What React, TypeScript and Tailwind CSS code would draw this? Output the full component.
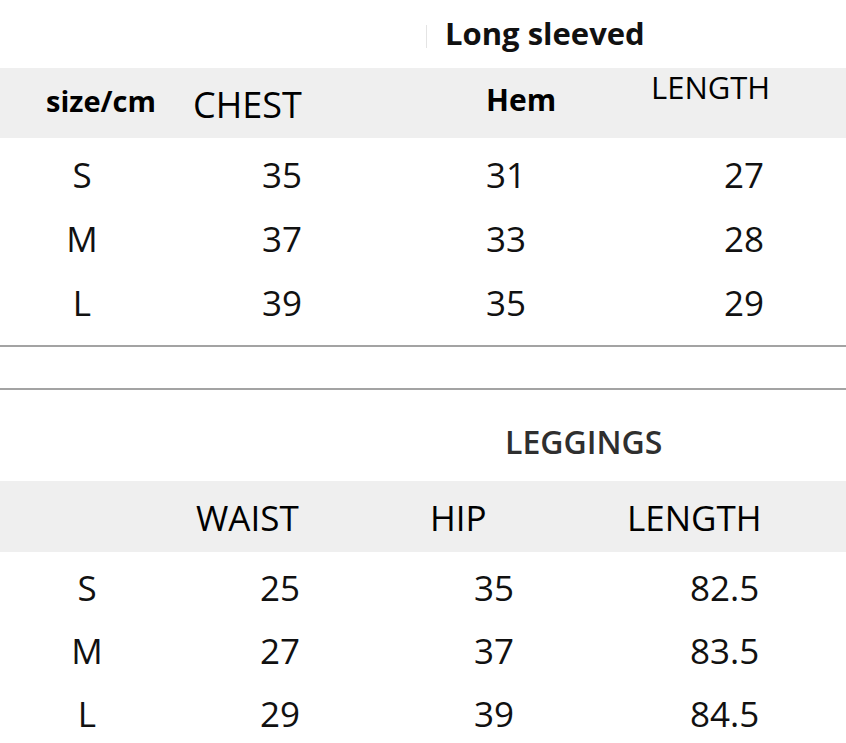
import React from "react";

const topRows = [
  ["S", "35", "31", "27"],
  ["M", "37", "33", "28"],
  ["L", "39", "35", "29"],
];

const bottomRows = [
  ["S", "25", "35", "82.5"],
  ["M", "27", "37", "83.5"],
  ["L", "29", "39", "84.5"],
];

export default function App() {
  return (
    <div className="w-[846px] h-[743px] bg-white text-black overflow-hidden font-['Open_Sans','Liberation_Sans',sans-serif]">
      {/* Title 1 */}
      <div className="h-[68px] flex items-start pl-[426px] pt-[18px]">
        <div className="w-px h-[23px] mt-[7px] bg-[#e4e4e4]" />
        <div className="ml-[18px] text-[31px] leading-none font-bold text-[#111]">Long sleeved</div>
      </div>

      {/* Header band 1 */}
      <div className="h-[70px] bg-[#efefef] flex items-start">
        <div className="w-[170px] pl-[46px] pt-[18px] text-[29px] leading-none font-bold">size/cm</div>
        <div className="w-[250px] pl-[23px] pt-[19px] text-[36px] leading-none">CHEST</div>
        <div className="w-[200px] pl-[66px] pt-[17px] text-[30px] leading-none font-bold">Hem</div>
        <div className="flex-1 pl-[31px] pt-[4px] text-[31px] leading-none">LENGTH</div>
      </div>

      {/* Rows 1 */}
      <div className="pt-[4px]">
        {topRows.map((r) => (
          <div key={r[0]} className="h-[64px] flex items-center text-[35px] leading-none text-[#111]">
            <div className="w-[164px] text-center">{r[0]}</div>
            <div className="w-[256px] pl-[98px]">{r[1]}</div>
            <div className="w-[200px] pl-[66px]">{r[2]}</div>
            <div className="flex-1 pl-[104px]">{r[3]}</div>
          </div>
        ))}
      </div>

      {/* Separator lines */}
      <div className="mt-[11px] h-[2px] bg-[#a3a3a3]" />
      <div className="mt-[41px] h-[2px] bg-[#a3a3a3]" />

      {/* Title 2 */}
      <div className="h-[91px] pt-[36px] pl-[505px]">
        <div className="text-[32px] leading-none font-semibold text-[#2f2f2f]">LEGGINGS</div>
      </div>

      {/* Header band 2 */}
      <div className="h-[71px] bg-[#efefef] flex items-start text-[35px] leading-none">
        <div className="w-[170px]" />
        <div className="w-[250px] pl-[26px] pt-[19px]">WAIST</div>
        <div className="w-[200px] pl-[10px] pt-[19px]">HIP</div>
        <div className="flex-1 pl-[7px] pt-[19px]">LENGTH</div>
      </div>

      {/* Rows 2 */}
      <div className="pt-[4px]">
        {bottomRows.map((r) => (
          <div key={r[0]} className="h-[63px] flex items-center text-[35px] leading-none text-[#111]">
            <div className="w-[174px] text-center">{r[0]}</div>
            <div className="w-[246px] pl-[86px]">{r[1]}</div>
            <div className="w-[200px] pl-[54px]">{r[2]}</div>
            <div className="flex-1 pl-[70px]">{r[3]}</div>
          </div>
        ))}
      </div>
    </div>
  );
}
